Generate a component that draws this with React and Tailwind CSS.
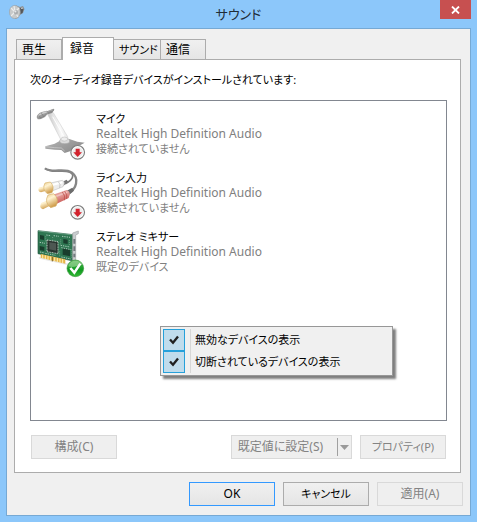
import { useState } from "react";

const TABS = [
  { label: "再生", width: "w-[46px]", size: "text-[12px]" },
  { label: "録音", width: "w-[52px]", size: "text-[12px]" },
  { label: "サウンド", width: "w-[47px]", size: "text-[11px]" },
  { label: "通信", width: "w-[45px]", size: "text-[12px]" },
];

const DEVICES = [
  { name: "マイク", driver: "Realtek High Definition Audio", status: "接続されていません", Icon: MicIcon },
  { name: "ライン入力", driver: "Realtek High Definition Audio", status: "接続されていません", Icon: LineInIcon },
  { name: "ステレオ ミキサー", driver: "Realtek High Definition Audio", status: "既定のデバイス", Icon: CardIcon },
];

function SpeakerIcon() {
  return (
    <svg width="16" height="16" viewBox="0 0 16 16" aria-hidden="true">
      <path d="M7 1.5 11 3l3-1 1.500 3L14 9l-3 2-2 3-3 1z" fill="#8b8f92" />
      <path d="M11 4l3.500 1-1 4-2 1z" fill="#54585c" />
      <path d="M12 4.500l2-.5" stroke="#c9cbcd" strokeWidth="1" />
      <ellipse cx="5.800" cy="8" rx="5.400" ry="6.600" fill="#c8caca" stroke="#9b9fa2" strokeWidth=".6" />
      <path d="M2 4l4 4-4 4M6 8l4-4M6 8l3 5M6 8 5 2" stroke="#ececec" strokeWidth="1.200" fill="none" />
      <ellipse cx="7" cy="8.300" rx="2" ry="2.400" fill="#a9acae" />
      <circle cx="6.400" cy="7.500" r="1" fill="#e8e9ea" />
    </svg>
  );
}

function DownBadge() {
  return (
    <g>
      <circle cx="131" cy="145" r="20.500" fill="#fff" stroke="#7d7d7d" strokeWidth="3.500" />
      <circle cx="131" cy="145" r="16" fill="#ececec" />
      <path d="M125 134h12v11h7l-13 14-13-14h7z" fill="#d2222d" />
    </g>
  );
}

function MicIcon() {
  return (
    <svg className="overflow-visible" width="50" height="50" viewBox="6 15 150 150" aria-hidden="true">
      <defs>
        <linearGradient id="micArm" x1="0" x2="1" y1=".3" y2="0">
          <stop offset="0" stopColor="#c4c4c4" />
          <stop offset=".5" stopColor="#fafafa" />
          <stop offset="1" stopColor="#d4d4d4" />
        </linearGradient>
        <linearGradient id="micBase" x1="0" x2="1" y2=".6">
          <stop offset="0" stopColor="#b5b5b5" />
          <stop offset="1" stopColor="#8b8b8b" />
        </linearGradient>
      </defs>
      <path d="M34 127 62 119l16-9 28-5 24 8 22 3-22 12-22 14-16 5-10-9-20-1-28-3z" fill="url(#micBase)" />
      <path d="M34 128l28 3 20 1 10 9" fill="none" stroke="#d2d2d2" strokeWidth="2" />
      <ellipse cx="92" cy="111" rx="15" ry="8" fill="#dcdcdc" stroke="#a8a8a8" strokeWidth="2" />
      <path d="M42 33c0-9 12-14 17-5l42 70c4 12-17 18-21 8z" fill="url(#micArm)" stroke="#c6c6c6" strokeWidth="1.500" />
      <path d="M56 38l36 64" stroke="#fff" strokeWidth="3" />
      <ellipse cx="91" cy="105" rx="10" ry="6" fill="#ededed" stroke="#b5b5b5" strokeWidth="1.500" />
      <path d="M36 23 58 14q5 1 2 5l-6 8-18 5z" fill="#8a8a8a" />
      <path d="M40 23l18-6" stroke="#bdbdbd" strokeWidth="2" />
      <path d="M8 40C9 29 20 23 39 20l5 3-5 9C32 42 20 46 11 46z" fill="#9b9b9b" />
      <path d="M13 36c7-8 16-10 25-12" fill="none" stroke="#cecece" strokeWidth="4" />
      <path d="M14 42c9 0 17-5 23-12M22 27l8 12M14 33l7 11" fill="none" stroke="#7d7d7d" strokeWidth="2" />
      <DownBadge />
    </svg>
  );
}

function LineInIcon() {
  return (
    <svg className="overflow-visible" width="50" height="50" viewBox="6 12 150 150" aria-hidden="true">
      <defs>
        <linearGradient id="plugGold" x1="0" x2=".4" y2="1">
          <stop offset="0" stopColor="#e9cb8d" />
          <stop offset=".4" stopColor="#fff3d1" />
          <stop offset="1" stopColor="#cf9c4a" />
        </linearGradient>
        <linearGradient id="plugRed" x1="0" x2=".4" y2="1">
          <stop offset="0" stopColor="#d98581" />
          <stop offset=".4" stopColor="#e7a39f" />
          <stop offset="1" stopColor="#c44e4a" />
        </linearGradient>
      </defs>
      <path d="M33 13C52 30 84 16 106 24c20 8 8 25-12 35" fill="none" stroke="#7c7c7c" strokeWidth="5" />
      <path d="M33 13C55 29 92 10 114 26c23 18 12 48-8 60" fill="none" stroke="#868686" strokeWidth="7" />
      <path d="M82 55l16-8 5 8-16 11z" fill="#747474" />
      <path d="M46 58l39-9q10 5 2 19L49 83z" fill="#ededed" stroke="#c6c6c6" strokeWidth="2" />
      <path d="M51 64l34-9" stroke="#fff" strokeWidth="6" />
      <path d="M73 53q8 8 4 19" fill="none" stroke="#b3b3b3" strokeWidth="2" />
      <path d="M15 71l23-6 5 13-22 7q-12-4-6-14z" fill="url(#plugGold)" />
      <path d="M33 57l16-3q14 14 5 32l-14 3q-17-13-7-32z" fill="url(#plugGold)" stroke="#d8b36b" strokeWidth="2" />
      <path d="M97 81l18-10 5 9-18 15z" fill="#6c6c6c" />
      <path d="M55 93l43-15q15 6 6 24l-45 22z" fill="url(#plugRed)" />
      <path d="M61 99l39-15" stroke="#efc0bd" strokeWidth="5" />
      <path d="M85 84q10 11 6 25M92 82q9 9 6 23" fill="none" stroke="#b84440" strokeWidth="2" />
      <path d="M22 117l24-10 6 16-25 13q-14-5-5-19z" fill="url(#plugGold)" />
      <path d="M42 93l17-4q18 16 7 37l-16 5q-20-16-8-38z" fill="url(#plugGold)" stroke="#d5ae65" strokeWidth="2" />
      <DownBadge />
    </svg>
  );
}

function CardIcon() {
  return (
    <svg className="overflow-visible" width="50" height="50" viewBox="6 3 150 150" aria-hidden="true">
      <defs>
        <linearGradient id="okBadge" x1="0" x2="0" y1="0" y2="1">
          <stop offset="0" stopColor="#55b654" />
          <stop offset=".6" stopColor="#0f9a20" />
          <stop offset="1" stopColor="#35ba35" />
        </linearGradient>
      </defs>
      <path d="M14 92l84 20 30-4v8H95L16 98z" fill="#e9e9e9" />
      <path d="M12 14 118 26v79L12 83z" fill="#2f7652" stroke="#20563c" strokeWidth="2" />
      <path d="M12 15 118 27" stroke="#7bb297" strokeWidth="2" />
      <path d="M20 84l74 16v13L20 95z" fill="#e5b54a" />
      <path d="M26 86v11M34 88v11M42 90v11M50 92v11M62 94v12M70 96v12M78 98v12M86 99v12" stroke="#fff0b3" strokeWidth="3" />
      <path d="M55 93v13" stroke="#765f28" strokeWidth="3" />
      <path d="M39 42l33 5v36l-33-6z" fill="#29352f" stroke="#c3d1c8" strokeWidth="3" strokeDasharray="3 2" />
      <path d="M46 49l20 3v22l-20-4z" fill="#4d5752" />
      <path d="M18 27l12 2v13l-12-2zM88 39l13 2v13l-13-2zM86 67l22 4v20l-22-5zM17 60l14 3v12l-14-3z" fill="#193d2d" />
      <path d="M37 27l14 2M59 29l16 2M84 31l24 3M17 49l16 3M80 58l28 5M82 65l29 6M82 93l29 6M34 82l30 6M18 78l14 3" stroke="#a9c9b8" strokeWidth="3" strokeDasharray="4 3" />
      <path d="M80 40v17M106 42v15M35 31v16M56 33v7M77 76v15M113 70v26" stroke="#8bb49c" strokeWidth="2" strokeDasharray="3 3" />
      <path d="M116 21l17-6v8l-8 4v85l-9-5z" fill="#c9cdcf" stroke="#a1a5a6" strokeWidth="2" />
      <path d="M118 39h6v14h-6zM118 61h6v14h-6zM118 83h6v11h-6z" fill="#737a7e" />
      <circle cx="124" cy="127" r="25" fill="url(#okBadge)" stroke="#3f9c42" strokeWidth="2" />
      <path d="M103 121c3-20 35-23 43-4-15-2-24 11-43 4z" fill="#b2dfad" opacity=".55" />
      <path d="M109 126l12 14 18-27" fill="none" stroke="#fff" strokeWidth="7.500" />
    </svg>
  );
}

function DeviceRow({ name, driver, status, Icon }) {
  return (
    <li className="flex h-[59px] gap-2.5 pl-[5px]">
      <Icon />
      <div className="pt-0.5 text-[11px] leading-[15px] text-[#808080]">
        <p className="text-black">{name}</p>
        <p className="text-[12px] leading-[15px]">{driver}</p>
        <p>{status}</p>
      </div>
    </li>
  );
}

function MenuCheck({ label }) {
  const [checked, setChecked] = useState(true);
  return (
    <label className="flex h-[22px] items-center text-[11px]">
      <span className="grid size-[22px] place-items-center">
        <input
          type="checkbox"
          checked={checked}
          onChange={(e) => setChecked(e.target.checked)}
          className="col-start-1 row-start-1 size-[22px] appearance-none border border-[#26a0da] bg-[#c0dcec]"
        />
        {checked && (
          <svg className="pointer-events-none col-start-1 row-start-1" width="10" height="10" viewBox="0 0 10 10" aria-hidden="true">
            <path d="M1 4.500 4 7.800 9 1.500" fill="none" stroke="#212121" strokeWidth="2.300" />
          </svg>
        )}
      </span>
      <span className="ml-[5px] flex h-full items-center border-l border-[#d7d7d7] pl-1">{label}</span>
    </label>
  );
}

function Button({ children, primary, disabled, small }) {
  const look = disabled
    ? "border-[#d9d9d9] bg-[#efefef] text-[#838383]"
    : primary
      ? "border-[#3399ff] bg-linear-to-b from-[#f0f0f0] to-[#e5e5e5] text-black"
      : "border-[#acacac] bg-linear-to-b from-[#f0f0f0] to-[#e5e5e5] text-black";
  return (
    <button disabled={disabled} className={`h-6 w-[86px] border whitespace-nowrap ${small ? "text-[11px]" : "text-[12px]"} ${look}`}>
      {children}
    </button>
  );
}

export default function App() {
  const [tab, setTab] = useState("録音");

  return (
    <div className="flex min-h-screen flex-col bg-[#8cc7fa] px-1.5 pb-1.5 font-['Noto_Sans','Noto_Sans_CJK_JP',sans-serif] text-[12px] leading-4 text-black [font-feature-settings:'palt']">
      <header className="grid h-7 grid-cols-[1fr_auto_1fr] items-start">
        <span className="pt-1 pl-[3px]">
          <SpeakerIcon />
        </span>
        <h1 className="pt-1 text-[13px] leading-5 text-[#1f2b36]">サウンド</h1>
        <button aria-label="閉じる" className="grid h-[19px] w-[31px] place-items-center justify-self-end bg-[#c75050]">
          <svg width="9" height="8" viewBox="0 0 9 8" aria-hidden="true">
            <path d="M1 .5l7 7M8 .5l-7 7" stroke="#fff" strokeWidth="1.800" />
          </svg>
        </button>
      </header>

      <main className="flex flex-1 flex-col border border-[#76a9d4] bg-[#f0f0f0] px-[7px] pt-2 pb-[9px]">
        <div role="tablist" className="flex h-[22px] items-end px-0.5">
          {TABS.map(({ label, width, size }) => (
            <button
              key={label}
              role="tab"
              aria-selected={tab === label}
              onClick={() => setTab(label)}
              className={
                tab === label
                  ? `${width} ${size} z-10 -mb-px h-[23px] border border-b-0 border-[#acacac] bg-white pr-3 whitespace-nowrap`
                  : `${width} ${size} h-5 border-t border-r border-[#acacac] bg-linear-to-b from-[#f0f0f0] to-[#e5e5e5] pr-0.5 pl-[5px] text-left whitespace-nowrap first:border-l`
              }
            >
              {label}
            </button>
          ))}
        </div>

        <section className="mr-0.5 flex flex-1 flex-col border border-[#acacac] bg-white pt-3 pr-[13px] pb-[13px] pl-[15px]">
          <h2 className="mb-3 text-[11px] leading-4">次のオーディオ録音デバイスがインストールされています:</h2>
          <div className="relative flex-1 border border-[#828790] pt-2">
            <ul>
              {DEVICES.map((device) => (
                <DeviceRow key={device.name} {...device} />
              ))}
            </ul>
            <div className="absolute top-[225px] left-[129px] w-[233px] border border-[#979797] bg-[#f0f0f0] p-0.5 shadow-[3px_3px_2px_#00000080]">
              <MenuCheck label="無効なデバイスの表示" />
              <MenuCheck label="切断されているデバイスの表示" />
            </div>
          </div>
          <div className="mt-3.5 flex gap-2 px-px">
            <div className="flex-1">
              <Button disabled>構成(C)</Button>
            </div>
            <div className="flex h-6 border border-[#d9d9d9] bg-[#efefef] text-[#838383]">
              <button disabled className="w-[105px] pr-3 pl-1 whitespace-nowrap">
                既定値に設定(S)
              </button>
              <button disabled aria-label="その他の設定" className="my-0.5 grid w-3.5 place-items-center border-l border-[#a0a0a0]">
                <svg width="9" height="5" viewBox="0 0 9 5" aria-hidden="true">
                  <path d="M0 0h9L4.500 5z" fill="#999" />
                </svg>
              </button>
            </div>
            <Button disabled small>プロパティ(P)</Button>
          </div>
        </section>

        <footer className="mt-[9px] flex justify-end gap-2">
          <Button primary>OK</Button>
          <Button small>キャンセル</Button>
          <Button disabled>適用(A)</Button>
        </footer>
      </main>
    </div>
  );
}
